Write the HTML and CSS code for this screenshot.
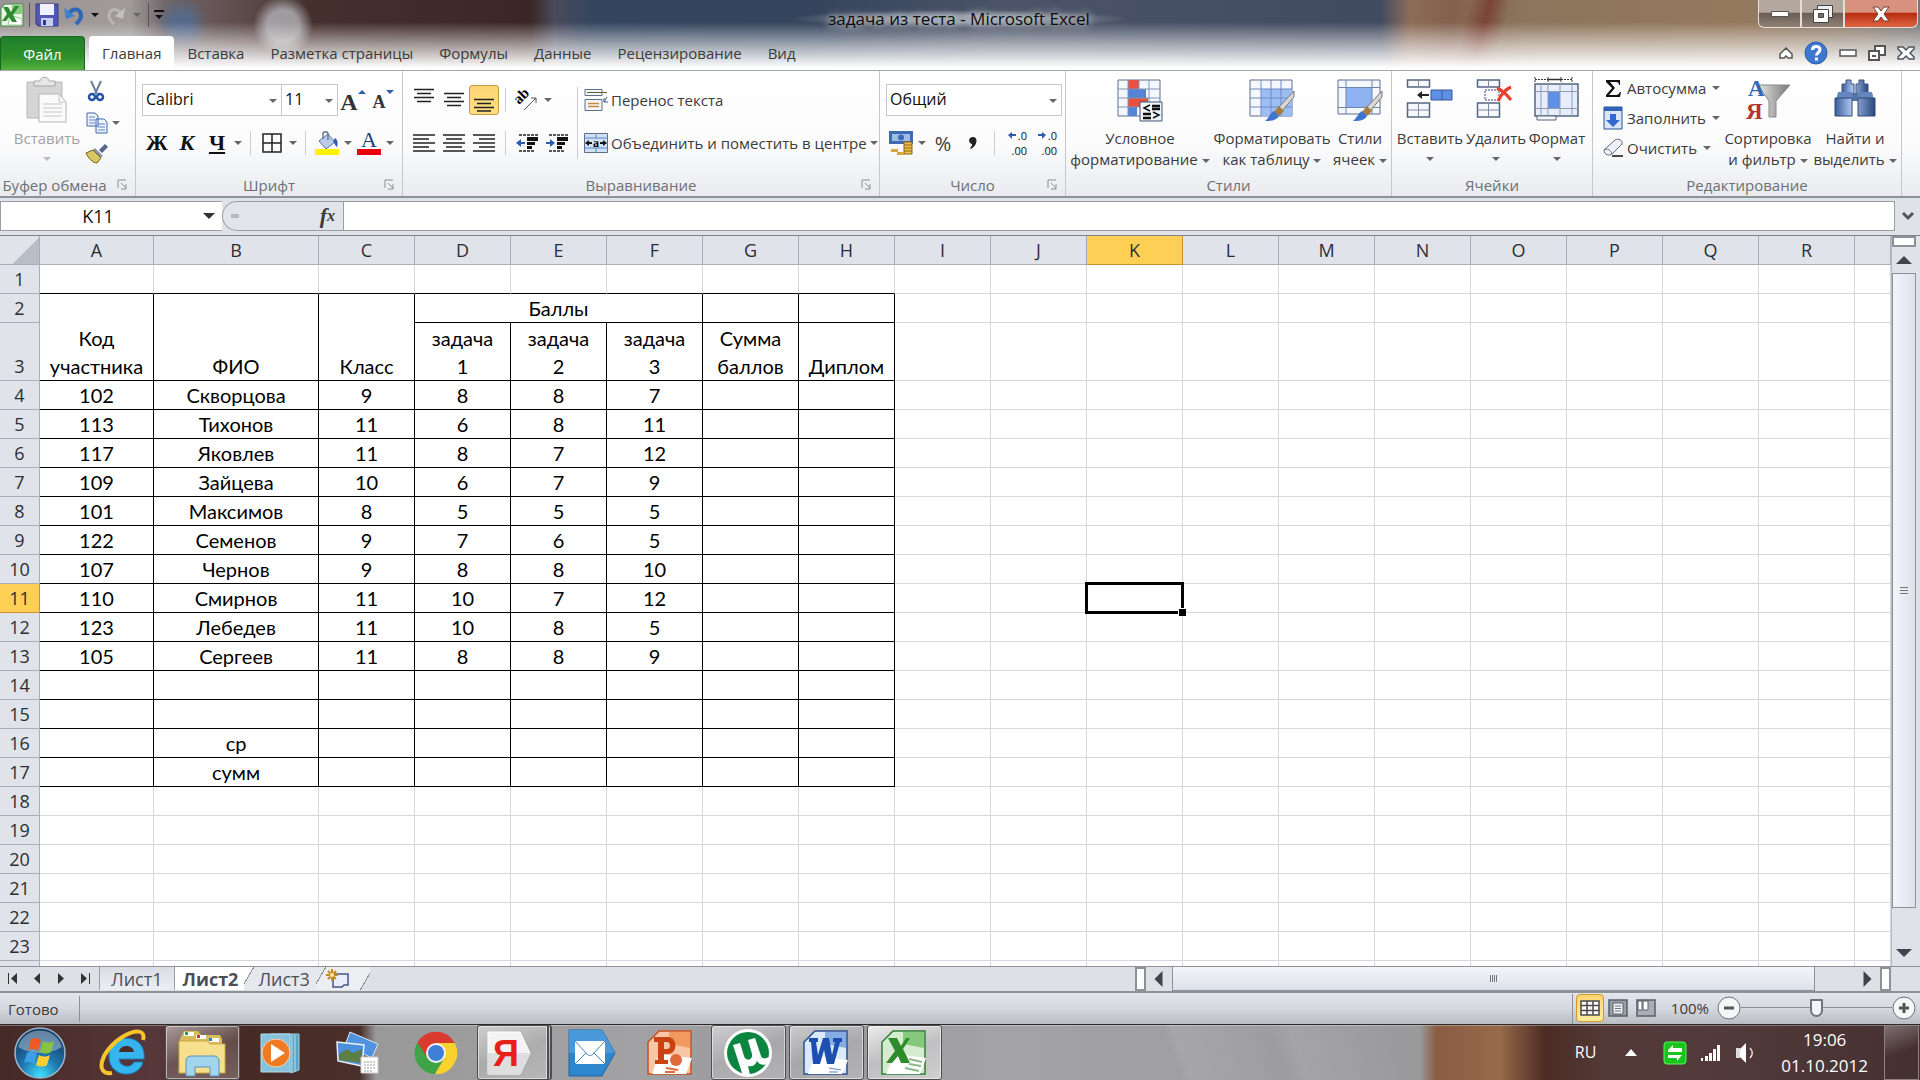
FILE: index.html
```html
<!DOCTYPE html>
<html lang="ru">
<head>
    <meta charset="UTF-8">
    <meta name="viewport" content="width=device-width, initial-scale=1.0">
    <title>задача из теста - Microsoft Excel</title>
    <link rel="stylesheet" href="styles.css">
</head>
<body>

<header class="window-top">
    <div class="titlebar">
        <div class="quick-access">
            <svg width="24" height="24" viewBox="0 0 24 24"><path d="M5 1h18v22H1V5z" fill="#e9f5e6" stroke="#3c8a3c"/><path d="M12 2h10v9H12z" fill="#8cca84"/><path d="M10 12l12 4v6H8z" fill="#fff" stroke="#9ac796"/><path d="M3 4h5l3 5 4-6h4l-6 9 4 7h-5l-3-5-3 4H2l5-7z" fill="#2e8b2e"/></svg>
            <span class="bar-line"></span>
            <button type="button" aria-label="Сохранить"><svg width="24" height="24" viewBox="0 0 24 24"><path d="M1 1h22v22H3l-2-2z" fill="#5157b5" stroke="#34388a"/><path d="M5 1h14v11H5z" fill="#eef0fb"/><path d="M6 15h12v8H6z" fill="#c9cdf0"/><path d="M8 17h3v5H8z" fill="#34388a"/></svg></button>
            <button type="button" aria-label="Отменить"><svg width="20" height="22" viewBox="0 0 20 22"><path d="M5 9c5-6 12-4 12 3 0 4-3 6-5 8" fill="none" stroke="#2f66b5" stroke-width="4"/><path d="M0 4l2 11 9-3z" fill="#3f7fd0"/></svg></button>
            <span class="caret black"></span>
            <button type="button" aria-label="Вернуть"><svg width="20" height="22" viewBox="0 0 20 22"><path d="M15 9C10 3 3 5 3 12c0 4 3 6 5 8" fill="none" stroke="#b9b5b5" stroke-width="3"/><path d="M19 4l-2 11-8-3z" fill="#c5c1c1"/></svg></button>
            <span class="caret"></span>
            <span class="bar-line"></span>
            <button type="button" aria-label="Настройка панели"><svg width="10" height="10" viewBox="0 0 10 10"><path d="M0 0h10v2H0zM1 5h8L5 9z" fill="#111"/></svg></button>
        </div>
        <h1 class="title">задача из теста - Microsoft Excel</h1>
        <div class="window-buttons">
            <button type="button" aria-label="Свернуть"><svg width="18" height="6" viewBox="0 0 18 6"><path d="M.5.5h17v5H.5z" fill="#fff" stroke="#555"/></svg></button>
            <button type="button" aria-label="Восстановить"><svg width="20" height="18" viewBox="0 0 20 18"><path d="M4.500.5h15v12h-15z" fill="#eee" stroke="#444"/><path d="M.5 4.500h15v13H.5z" fill="#fff" stroke="#444"/><path d="M5.500 8.500h5v4h-5z" fill="#776d68" stroke="#444"/></svg></button>
            <button type="button" class="close" aria-label="Закрыть"><svg width="18" height="16" viewBox="0 0 18 16"><path d="M1 1h5l3 4 3-4h5l-5 7 5 7h-5l-3-4-3 4H1l5-7z" fill="#fff" stroke="#6b3a33"/></svg></button>
        </div>
    </div>
    <nav class="tabs">
        <button type="button" class="file-tab">Файл</button>
        <button type="button" class="tab active">Главная</button>
        <button type="button" class="tab">Вставка</button>
        <button type="button" class="tab">Разметка страницы</button>
        <button type="button" class="tab">Формулы</button>
        <button type="button" class="tab">Данные</button>
        <button type="button" class="tab">Рецензирование</button>
        <button type="button" class="tab">Вид</button>
        <div class="book-buttons">
            <button type="button" aria-label="Свернуть ленту"><svg width="14" height="12" viewBox="0 0 14 12"><path d="M7 1l6 6v4H9L7 9l-2 2H1V7z" fill="#fff" stroke="#555" stroke-width="1.500"/></svg></button>
            <button type="button" aria-label="Справка"><svg width="24" height="24" viewBox="0 0 24 24"><circle cx="12" cy="12" r="11" fill="#3f78cf" stroke="#2b5ca8"/><path d="M8.500 9c0-5 7.500-4.500 7.500-.5 0 3-3.500 3-3.500 6M12.500 16.500v3" fill="none" stroke="#fff" stroke-width="3"/></svg></button>
            <button type="button" aria-label="Свернуть книгу"><svg width="18" height="8" viewBox="0 0 18 8"><path d="M1 1h16v6H1z" fill="#fff" stroke="#555" stroke-width="1.500"/></svg></button>
            <button type="button" aria-label="Восстановить книгу"><svg width="18" height="16" viewBox="0 0 18 16"><path d="M7 1h10v9H7z" fill="#fff" stroke="#555" stroke-width="2"/><path d="M1 6h10v9H1z" fill="#fff" stroke="#555" stroke-width="2"/><path d="M4 10h4v2H4z" fill="#555"/></svg></button>
            <button type="button" aria-label="Закрыть книгу"><svg width="18" height="14" viewBox="0 0 18 14"><path d="M1 1h5l3 3 3-3h5v2l-4 4 4 4v2h-5l-3-3-3 3H1v-2l4-4-4-4z" fill="#fff" stroke="#4d5560" stroke-width="1.500"/></svg></button>
        </div>
    </nav>
</header>

<section class="ribbon">
    <div class="group clipboard">
        <div class="group-body">
            <button type="button" class="big disabled">
                <svg width="42" height="46" viewBox="0 0 42 46"><path d="M1 5h35v36H1z" fill="#d5d5d5" stroke="#b9b9b9"/><path d="M8 9V4h6c0-5 9-5 9 0h6v5z" fill="#e6e6e6" stroke="#a8a8a8"/><path d="M13 17h20l7 8v20H13z" fill="#fafafa" stroke="#b5b5b5"/><path d="M33 17v8h7M17 27h19M17 31h19M17 35h19M17 39h19" fill="none" stroke="#c6c6c6"/></svg>
                <span>Вставить</span><span class="caret"></span>
            </button>
            <div class="clip-tools">
                <button type="button" aria-label="Вырезать"><svg width="20" height="22" viewBox="0 0 20 22"><path d="M5 1l6 13M15 1L9 14" stroke="#6a7d9c" stroke-width="2"/><circle cx="6" cy="17" r="3" fill="none" stroke="#2453a8" stroke-width="2.500"/><circle cx="14" cy="17" r="3" fill="none" stroke="#2453a8" stroke-width="2.500"/></svg></button>
                <button type="button" aria-label="Копировать"><svg width="22" height="22" viewBox="0 0 22 22"><path d="M1 1h8l3 3v10H1zM10 7h8l3 3v11H10z" fill="#eef4fd" stroke="#3d67ac"/><path d="M3 5h6M3 8h6M3 11h6M12 12h7M12 15h7M12 18h7" stroke="#5c84c4"/></svg><span class="caret"></span></button>
                <button type="button" aria-label="Формат по образцу"><svg width="22" height="20" viewBox="0 0 22 20"><path d="M13 6l6-6 3 3-6 6z" fill="#56648c"/><path d="M9 4l8 8-3 2-8-7z" fill="#8a93a8"/><path d="M7 6l8 8-4 5C7 19 2 14 0 9z" fill="#d9c662" stroke="#6e601c"/></svg></button>
            </div>
        </div>
        <div class="group-label"><span>Буфер обмена</span><svg class="launcher" viewBox="0 0 10 11"><path d="M1 9V1h8M4 4l5 5M9 5v5H4" fill="none" stroke="#8a8f96"/></svg></div>
    </div>

    <div class="group font">
        <div class="group-body rows">
            <div class="row">
                <span class="combo name"><select aria-label="Шрифт"><option>Calibri</option></select></span>
                <span class="combo size"><select aria-label="Размер шрифта"><option>11</option></select></span>
                <button type="button" class="tool letter grow">A<svg width="8" height="4" viewBox="0 0 8 4"><path d="M0 4l4-4 4 4z" fill="#2d5fa8"/></svg></button>
                <button type="button" class="tool letter shrink">A<svg width="8" height="4" viewBox="0 0 8 4"><path d="M0 0h8L4 4z" fill="#2d5fa8"/></svg></button>
            </div>
            <div class="row">
                <button type="button" class="tool letter">Ж</button>
                <button type="button" class="tool letter italic">К</button>
                <button type="button" class="tool letter underline">Ч</button><span class="caret"></span>
                <span class="sep"></span>
                <button type="button" class="tool" aria-label="Границы"><svg width="20" height="20" viewBox="0 0 20 20"><path d="M1 1h18v18H1zM10 1v18M1 10h18" fill="none" stroke="#222" stroke-width="1.500"/></svg></button><span class="caret"></span>
                <span class="sep"></span>
                <button type="button" class="tool" aria-label="Цвет заливки"><svg width="24" height="24" viewBox="0 0 24 24"><path d="M4 10l9-7 7 8-9 7z" fill="#b9cbe6" stroke="#5b76a6"/><path d="M8 8V3c0-3 5-3 5 0v6" fill="none" stroke="#6b7688" stroke-width="1.500"/><path d="M20 7c3 2 3 6 2 9-2-1-2-4-4-5z" fill="#2c5cb0"/><path d="M0 18h24v6H0z" fill="#fff200"/></svg></button><span class="caret"></span>
                <button type="button" class="tool letter font-color">A</button><span class="caret"></span>
            </div>
        </div>
        <div class="group-label"><span>Шрифт</span><svg class="launcher" viewBox="0 0 10 11"><path d="M1 9V1h8M4 4l5 5M9 5v5H4" fill="none" stroke="#8a8f96"/></svg></div>
    </div>

    <div class="group align">
        <div class="group-body">
            <div class="rows align-left">
                <div class="row">
                    <button type="button" class="tool" aria-label="По верхнему краю"><svg width="22" height="24" viewBox="0 0 22 24"><path d="M1 1.500h20M4 5.500h14M1 9.500h20M4 13.500h14" stroke="#222" stroke-width="1.500"/></svg></button>
                    <button type="button" class="tool" aria-label="По середине"><svg width="22" height="24" viewBox="0 0 22 24"><path d="M1 5.500h20M4 9.500h14M1 13.500h20M4 17.500h14" stroke="#222" stroke-width="1.500"/></svg></button>
                    <button type="button" class="tool pressed" aria-label="По нижнему краю"><svg width="22" height="24" viewBox="0 0 22 24"><path d="M1 11.500h20M4 15.500h14M1 19.500h20M4 23h14" stroke="#222" stroke-width="1.500"/></svg></button>
                    <span class="sep"></span>
                    <button type="button" class="tool" aria-label="Ориентация"><svg width="24" height="24" viewBox="0 0 24 24"><text x="0" y="0" transform="translate(4 17) rotate(-45)" class="svg-ab">ab</text><path d="M9 22L21 10M16 10h5v5" fill="none" stroke="#555"/></svg></button><span class="caret"></span>
                </div>
                <div class="row">
                    <button type="button" class="tool" aria-label="По левому краю"><svg width="22" height="20" viewBox="0 0 22 20"><path d="M0 2h22M0 6h16M0 10h22M0 14h16M0 18h22" stroke="#222" stroke-width="1.500"/></svg></button>
                    <button type="button" class="tool" aria-label="По центру"><svg width="22" height="20" viewBox="0 0 22 20"><path d="M0 2h22M3 6h16M0 10h22M3 14h16M0 18h22" stroke="#222" stroke-width="1.500"/></svg></button>
                    <button type="button" class="tool" aria-label="По правому краю"><svg width="22" height="20" viewBox="0 0 22 20"><path d="M0 2h22M6 6h16M0 10h22M6 14h16M0 18h22" stroke="#222" stroke-width="1.500"/></svg></button>
                    <span class="sep"></span>
                    <button type="button" class="tool" aria-label="Уменьшить отступ"><svg width="22" height="20" viewBox="0 0 22 20"><path d="M3 2h19M3 18h16" stroke="#222" stroke-width="1.500" stroke-dasharray="3 1"/><path d="M11 4h11v4H11zM11 9h8v3h-8zM11 13h5v3h-5z" fill="#111"/><path d="M0 10l5-4v3h4v2H5v3z" fill="#2c5cb0"/></svg></button>
                    <button type="button" class="tool" aria-label="Увеличить отступ"><svg width="22" height="20" viewBox="0 0 22 20"><path d="M3 2h19M3 18h16" stroke="#222" stroke-width="1.500" stroke-dasharray="3 1"/><path d="M11 4h11v4H11zM11 9h8v3h-8zM11 13h5v3h-5z" fill="#111"/><path d="M9 10L4 6v3H0v2h4v3z" fill="#2c5cb0"/></svg></button>
                </div>
            </div>
            <span class="sep tall"></span>
            <div class="rows">
                <div class="row">
                    <button type="button" class="wide"><svg width="24" height="24" viewBox="0 0 24 24"><path d="M1 1.500h17v6H1zM1 11.500h17v11H1z" fill="#f2f5fa" stroke="#5f6f88"/><path d="M3 4.500h20" stroke="#6b5b2a"/><path d="M4 15.500h11M4 18.500h11" stroke="#c98a3a" stroke-width="1.500"/><path d="M23 9l-3 5M20 10v4h4" fill="none" stroke="#3b5a8c"/></svg><span>Перенос текста</span></button>
                </div>
                <div class="row">
                    <button type="button" class="wide"><svg width="24" height="20" viewBox="0 0 24 20"><path d="M.5.5h23v19H.5z" fill="#cfe0f7" stroke="#5f6f88"/><path d="M0 5h24M0 15h24M12 0v5M12 15v5" stroke="#5f86c0"/><path d="M1 10l4-3v2h3v2H5v2zM23 10l-4-3v2h-3v2h3v2z" fill="#111"/><text x="9" y="14" class="svg-a">a</text></svg><span>Объединить и поместить в центре</span><span class="caret"></span></button>
                </div>
            </div>
        </div>
        <div class="group-label"><span>Выравнивание</span><svg class="launcher" viewBox="0 0 10 11"><path d="M1 9V1h8M4 4l5 5M9 5v5H4" fill="none" stroke="#8a8f96"/></svg></div>
    </div>

    <div class="group number">
        <div class="group-body rows">
            <div class="row">
                <span class="combo format"><select aria-label="Числовой формат"><option>Общий</option></select></span>
            </div>
            <div class="row">
                <button type="button" class="tool" aria-label="Финансовый формат"><svg width="24" height="24" viewBox="0 0 24 24"><path d="M0 0h24v13H0z" fill="#3e69b3"/><path d="M3 3h18v7H3z" fill="#9fbce8"/><circle cx="12" cy="6.500" r="3" fill="#3e69b3"/><path d="M15 11h8v12h-8z" fill="#efc04a" stroke="#8f6512"/><path d="M15 14h8M15 17h8M15 20h8" stroke="#8f6512"/><path d="M2 18h7v3H2zM8 21h7v3H8z" fill="#dba73a"/></svg></button><span class="caret"></span>
                <button type="button" class="tool percent">%</button>
                <button type="button" class="tool" aria-label="Формат с разделителями"><svg width="8" height="12" viewBox="0 0 8 12"><path d="M4 0c5 0 5 8-2 12l-1-1c2-2 2-3 2-4-4-1-4-7 1-7z" fill="#222"/></svg></button>
                <span class="sep"></span>
                <button type="button" class="tool decimals"><span><svg width="8" height="7" viewBox="0 0 8 7"><path d="M0 3l4-3v2h4v2H4v3z" fill="#2c5cb0"/></svg>.0</span><span>.00</span></button>
                <button type="button" class="tool decimals"><span><svg width="8" height="7" viewBox="0 0 8 7"><path d="M8 3L4 0v2H0v2h4v3z" fill="#2c5cb0"/></svg>.0</span><span>.00</span></button>
            </div>
        </div>
        <div class="group-label"><span>Число</span><svg class="launcher" viewBox="0 0 10 11"><path d="M1 9V1h8M4 4l5 5M9 5v5H4" fill="none" stroke="#8a8f96"/></svg></div>
    </div>

    <div class="group styles">
        <div class="group-body">
            <button type="button" class="big conditional">
                <svg width="46" height="46" viewBox="0 0 46 46"><path d="M1 3h42v36H1z" fill="#f4f8fe" stroke="#5c6f90"/><path d="M11 3h11v9H11zM11 21h20v9H11z" fill="#e8503f"/><path d="M11 12h18v9H11zM11 30h9v9h-9z" fill="#5583d8"/><path d="M1 12h42M1 21h42M1 30h42M11 3v36M22 3v9M32 3v36" stroke="#8195b8"/><path d="M23 25h22v19H23z" fill="#eef5fd" stroke="#45556f"/><path d="M33 28l-6 3 6 3M36 35l6 3-6 3" fill="none" stroke="#111" stroke-width="1.500"/><path d="M35 29h8M35 32h8M26 37h8M26 41h8" stroke="#111" stroke-width="2.500"/></svg>
                <span>Условное</span><span>форматирование <i class="caret"></i></span>
            </button>
            <button type="button" class="big as-table">
                <svg width="46" height="46" viewBox="0 0 46 46"><path d="M1 3h42v36H1z" fill="#f4f8fe" stroke="#5c6f90"/><path d="M12 12h31v27H12z" fill="#9dbdf5"/><path d="M1 12h42M1 21h42M1 30h42M12 3v36M22 3v36M32 3v36" stroke="#6f8bc0"/><path d="M45 14L30 30l3 4 12-14z" fill="#d6d6d6" stroke="#777"/><path d="M30 29l5 5-5 5-5-4z" fill="#a87b3f"/><path d="M25 34l5 5c-3 5-9 5-14 5 4-3 5-8 9-10z" fill="#3f75cc"/></svg>
                <span>Форматировать</span><span>как таблицу <i class="caret"></i></span>
            </button>
            <button type="button" class="big cell-styles">
                <svg width="46" height="46" viewBox="0 0 46 46"><path d="M1 3h42v34H1z" fill="#f4f8fe" stroke="#5c6f90"/><path d="M9 11h26v19H9z" fill="#8fb2f2"/><path d="M9 3v34M35 3v34M1 10.500h42M1 30.500h42" stroke="#6f86ab"/><path d="M45 14L30 30l3 4 12-14z" fill="#d6d6d6" stroke="#777"/><path d="M30 29l5 5-5 5-5-4z" fill="#a87b3f"/><path d="M25 34l5 5c-3 5-9 5-14 5 4-3 5-8 9-10z" fill="#3f75cc"/></svg>
                <span>Стили</span><span>ячеек <i class="caret"></i></span>
            </button>
        </div>
        <div class="group-label"><span>Стили</span></div>
    </div>

    <div class="group cells">
        <div class="group-body">
            <button type="button" class="big insert">
                <svg width="46" height="46" viewBox="0 0 46 46"><path d="M.5 3h22v7H.5zM.5 26h22v14H.5z" fill="#f6f8fc" stroke="#56657f" stroke-width="1.500"/><path d="M11.500 3v7M11.500 26v14M0 33h23" stroke="#7b8ba6"/><path d="M24 13h21v10H24z" fill="#5f8fe6" stroke="#35579a"/><path d="M35 13v10" stroke="#35579a"/><path d="M10 18l5-4v3h7v2h-7v3z" fill="#222"/></svg>
                <span>Вставить</span><span class="caret"></span>
            </button>
            <button type="button" class="big delete">
                <svg width="46" height="46" viewBox="0 0 46 46"><path d="M4.500 3h22v7h-22zM4.500 26h22v14h-22z" fill="#f6f8fc" stroke="#56657f" stroke-width="1.500"/><path d="M15.500 3v7M15.500 26v14M4 33h23" stroke="#7b8ba6"/><path d="M12 13h14v10H12z" fill="none" stroke="#3d3d96" stroke-dasharray="2 1"/><path d="M24 11c5 2 10 7 14 12M38 10c-5 2-10 8-13 14" stroke="#e8402c" stroke-width="3" fill="none"/></svg>
                <span>Удалить</span><span class="caret"></span>
            </button>
            <button type="button" class="big format-cells">
                <svg width="46" height="46" viewBox="0 0 46 46"><path d="M1 0v5M14 0v5M27 0v5M38 0v5M1 2.500h13M27 2.500h11" stroke="#333" stroke-dasharray="2 1"/><path d="M14 2.500h13" stroke="#333" stroke-width="1.500"/><path d="M1 7h43v32H1z" fill="#e7eefa" stroke="#56657f" stroke-width="1.500"/><path d="M3 39h19v4H3z" fill="#f6f8fc" stroke="#56657f"/><path d="M14 15h12v16H14z" fill="#5f8fe6"/><path d="M7 7v32M14 7v32M26 7v32M38 7v32M1 14.500h43M1 31.500h43" stroke="#8b9bb8"/></svg>
                <span>Формат</span><span class="caret"></span>
            </button>
        </div>
        <div class="group-label"><span>Ячейки</span></div>
    </div>

    <div class="group editing">
        <div class="group-body">
            <div class="edit-list">
                <button type="button"><svg width="20" height="24" viewBox="0 0 20 24"><path d="M3 4h14v5h-1c0-2-1-3-3-3H7l5 6-6 7h7c2 0 3-1 4-3h1l-1 5H3v-2l6-7-6-6z" fill="#111"/></svg><span>Автосумма</span><i class="caret"></i></button>
                <button type="button"><svg width="20" height="24" viewBox="0 0 20 24"><path d="M1 1h18v22H1z" fill="#d9e6f8" stroke="#29508f"/><path d="M1 1h18v4H1z" fill="#2f62b5"/><path d="M7 8h6v6h4l-7 7-7-7h4z" fill="#2f6ad0"/></svg><span>Заполнить</span><i class="caret"></i></button>
                <button type="button"><svg width="20" height="24" viewBox="0 0 20 24"><path d="M1 14L12 4c3-2 8 0 7 4L9 18c-3 2-8 1-8-4z" fill="#eef2f8" stroke="#5d6b82"/><path d="M1 14c3-2 7 0 8 4" fill="none" stroke="#5d6b82"/><path d="M9 20h11" stroke="#111" stroke-width="1.500"/></svg><span>Очистить</span><i class="caret"></i></button>
            </div>
            <button type="button" class="big sort">
                <svg width="46" height="46" viewBox="0 0 46 46"><defs><linearGradient id="funnel"><stop offset="0" stop-color="#e4e4e4"/><stop offset="1" stop-color="#777"/></linearGradient></defs><path d="M13 8h32L31 24v16h-7V24z" fill="url(#funnel)" stroke="#8a8a8a"/><text x="3" y="19" class="svg-sort blue">А</text><text x="1" y="42" class="svg-sort red">Я</text></svg>
                <span>Сортировка</span><span>и фильтр <i class="caret"></i></span>
            </button>
            <button type="button" class="big find">
                <svg width="46" height="46" viewBox="0 0 46 46"><defs><linearGradient id="lens"><stop offset="0" stop-color="#3a5c98"/><stop offset=".4" stop-color="#a9c3ee"/><stop offset="1" stop-color="#2a467c"/></linearGradient></defs><path d="M14 3h5v4h3v11h-12V7h4zM27 3h5v4h4v11H24V7h3z" fill="url(#lens)" stroke="#3a5380"/><path d="M20 16h6v8h-6z" fill="#54719f"/><path d="M6 15h14l1 8H4zM26 15h14l2 8H25z" fill="#6485c0"/><path d="M3 21h17v18H3zM26 21h17v18H26z" fill="url(#lens)" stroke="#2f4878"/></svg>
                <span>Найти и</span><span>выделить <i class="caret"></i></span>
            </button>
        </div>
        <div class="group-label"><span>Редактирование</span></div>
    </div>
</section>

<section class="formula-bar">
    <input type="text" class="name-box" aria-label="Имя ячейки" value="K11">
    <button type="button" class="name-list" aria-label="Список имён"><i class="caret"></i></button>
    <div class="fx"><span class="fx-dot"></span><button type="button">f<sub>x</sub></button></div>
    <input type="text" class="formula" aria-label="Строка формул">
    <button type="button" class="expand" aria-label="Развернуть"><svg width="12" height="10" viewBox="0 0 12 10"><path d="M1 2l5 5 5-5" fill="none" stroke="#555" stroke-width="3"/></svg></button>
</section>

<main class="workspace">
    <div class="sheet">
        <table id="grid">
            <colgroup><col class="col-head"><col class="col-a"><col class="col-b"></colgroup>
            <thead><tr><th class="corner"></th></tr></thead>
            <tbody></tbody>
        </table>
    </div>
    <div class="vscroll">
        <div class="split"></div>
        <svg class="arrow" viewBox="0 0 16 8"><path d="M0 8l8-8 8 8z" fill="#3f444c"/></svg>
        <div class="vthumb"><i></i><i></i><i></i></div>
        <svg class="arrow last" viewBox="0 0 16 8"><path d="M0 0h16L8 8z" fill="#3f444c"/></svg>
    </div>
</main>

<section class="sheet-bar">
    <div class="sheet-nav">
        <button type="button" aria-label="Первый лист"><svg width="10" height="11" viewBox="0 0 10 11"><path d="M0 0h1v11H0zM9 0v11L3 5.500z" fill="#333"/></svg></button>
        <button type="button" aria-label="Предыдущий лист"><svg width="10" height="11" viewBox="0 0 10 11"><path d="M8 0v11L2 5.500z" fill="#333"/></svg></button>
        <button type="button" aria-label="Следующий лист"><svg width="10" height="11" viewBox="0 0 10 11"><path d="M2 0v11l6-5.500z" fill="#333"/></svg></button>
        <button type="button" aria-label="Последний лист"><svg width="10" height="11" viewBox="0 0 10 11"><path d="M1 0v11l6-5.500zM9 0h1v11H9z" fill="#333"/></svg></button>
    </div>
    <button type="button" class="sheet-tab first">Лист1</button>
    <button type="button" class="sheet-tab current">Лист2</button>
    <button type="button" class="sheet-tab slanted">Лист3</button>
    <button type="button" class="sheet-tab slanted new" aria-label="Вставить лист"><svg width="24" height="20" viewBox="0 0 24 20"><path d="M7 5h15v11h-4l-2 2H7z" fill="#e8eefc" stroke="#44558a" stroke-width="1.500"/><path d="M6 0v12M0 6h12M2 2l8 8M10 2l-8 8" stroke="#c98a1c" stroke-width="2"/><circle cx="6" cy="6" r="2" fill="#ffe9a8"/></svg></button>
    <div class="hscroll">
        <div class="hsplit"></div>
        <svg class="harrow" viewBox="0 0 8 16"><path d="M8 0v16L0 8z" fill="#3f444c"/></svg>
        <div class="hthumb"><i></i><i></i><i></i><i></i></div>
        <svg class="harrow right" viewBox="0 0 8 16"><path d="M0 0v16l8-8z" fill="#3f444c"/></svg>
        <div class="hsplit"></div>
    </div>
</section>

<footer class="status">
    <span class="ready">Готово</span>
    <div class="status-right">
        <button type="button" class="view on" aria-label="Обычный"><svg width="20" height="16" viewBox="0 0 20 16"><path d="M1 1h18v14H1zM7 1v14M13 1v14M1 5.500h18M1 10.500h18" fill="#fff" stroke="#4a4a4a" stroke-width="1.500"/></svg></button>
        <button type="button" class="view" aria-label="Разметка страницы"><svg width="20" height="18" viewBox="0 0 20 18"><path d="M1 1h18v16H1z" fill="#9ba0a8" stroke="#5a5f68" stroke-width="1.500"/><path d="M5 4h10v11H5z" fill="#eef0f3" stroke="#5a5f68"/><path d="M7 7h6M7 9.500h6M7 12h6" stroke="#70757e"/></svg></button>
        <button type="button" class="view" aria-label="Страничный режим"><svg width="20" height="18" viewBox="0 0 20 18"><path d="M1 1h18v16H1z" fill="#a9aeb6" stroke="#5a5f68" stroke-width="1.500"/><path d="M2 2h4v9H2zM7 2h5v9H7z" fill="#fff" stroke="#5a5f68"/></svg></button>
        <span class="percent-value">100%</span>
        <button type="button" class="round" aria-label="Уменьшить"><svg width="24" height="24" viewBox="0 0 24 24"><circle cx="12" cy="12" r="11" fill="#f5f6f8" stroke="#6d727a"/><path d="M7 12h10" stroke="#555" stroke-width="3"/></svg></button>
        <input type="range" class="zoom" aria-label="Масштаб" min="0" max="100" value="50">
        <button type="button" class="round" aria-label="Увеличить"><svg width="24" height="24" viewBox="0 0 24 24"><circle cx="12" cy="12" r="11" fill="#f5f6f8" stroke="#6d727a"/><path d="M7 12h10M12 7v10" stroke="#555" stroke-width="3"/></svg></button>
    </div>
</footer>

<nav class="taskbar">
    <button type="button" class="start" aria-label="Пуск">
        <svg width="52" height="52" viewBox="0 0 52 52"><defs><radialGradient id="orb" cx=".5" cy=".95" r=".9"><stop offset="0" stop-color="#3fe0ff"/><stop offset=".45" stop-color="#1f74ac"/><stop offset="1" stop-color="#12385f"/></radialGradient></defs><circle cx="26" cy="26" r="25" fill="url(#orb)" stroke="#9bb6cc" stroke-width="1.500"/><path d="M4 20C10-2 42-2 48 20c-14 8-30 8-44 0z" fill="#c9dcec" opacity=".45"/><path d="M17 12c4-2 7-1 10 1l-3 11c-3-2-6-3-10-1z" fill="#ee5a24"/><path d="M29 14c4 2 7 2 11 0l-3 11c-4 2-7 2-11 0z" fill="#86c440"/><path d="M13 26c4-2 7-1 10 1l-3 10c-3-2-6-3-10-1z" fill="#3d9fe8"/><path d="M25 28c4 2 7 2 11 0l-3 10c-4 2-7 2-11 0z" fill="#ffce2e"/></svg>
    </button>
    <button type="button" class="app" aria-label="Internet Explorer">
        <svg width="48" height="46" viewBox="0 0 48 46"><path d="M44 29H19c1 9 13 9 15 3h9c-4 17-34 17-34-6 0-24 38-24 35 3z" fill="#35b5ee" stroke="#1b7fc0"/><path d="M19 22h15c-1-8-14-8-15 0z" fill="#4b2d2a"/><path d="M12 43C-6 46 0 20 24 6c12-7 22-6 19 4" fill="none" stroke="#f6c42c" stroke-width="4"/></svg>
    </button>
    <button type="button" class="app open" aria-label="Проводник">
        <svg width="48" height="48" viewBox="0 0 48 48"><path d="M4 6l2-4h14l3 4h19l2 4v33H2V10z" fill="#d9bc5a"/><path d="M6 3h10v4H6zM18 6h10v4H18zM31 9h10v4H31z" fill="#fff"/><path d="M7 3h3v3H7z" fill="#3b9a3b"/><path d="M19 6h3v3h-3z" fill="#c93a2a"/><path d="M31 9h3v3h-3z" fill="#2c7dc9"/><path d="M1 12h28l3 3h15v29H1z" fill="#f6e08d" stroke="#c9a945"/><path d="M8 47V32c0-3 2-5 5-5h23c3 0 5 2 5 5v15h-9V38H17v9z" fill="#a3d4ee" stroke="#5795bf"/></svg>
    </button>
    <button type="button" class="app" aria-label="Проигрыватель">
        <svg width="42" height="42" viewBox="0 0 42 42"><path d="M12 2h28v36l-8 3z" fill="#5ba5c4" stroke="#a5d2e4"/><path d="M36 3v36M33 3v37" stroke="#bfe3f0"/><path d="M2 2h29v38H2z" fill="#86c2dc" stroke="#b5dcea"/><circle cx="17" cy="21" r="14" fill="#f07a23" stroke="#fbd3ad"/><path d="M12 12l14 9-14 9z" fill="#fff"/></svg>
    </button>
    <button type="button" class="app" aria-label="Фотографии">
        <svg width="44" height="44" viewBox="0 0 44 44"><path d="M14 1l28 12-6 14L9 14z" fill="#4f93e0" stroke="#dfe8f2"/><path d="M1 11l27 3-2 21L2 30z" fill="#4a90e0" stroke="#eee" stroke-width="1.500"/><path d="M3 23l8-5 6 4 9-4v14L3 29z" fill="#5c7f45"/><path d="M25 26h17v16H25z" fill="#fff" stroke="#ccc"/><path d="M28 31h12M28 34h12M28 37h12M28 40h9" stroke="#999" stroke-dasharray="2 1"/></svg>
    </button>
    <button type="button" class="app" aria-label="Chrome">
        <svg width="44" height="44" viewBox="0 0 44 44"><path d="M22 22L3.800 11.500A21 21 0 0 1 40.200 11.500z" fill="#da3b2e"/><path d="M22 22L3.800 11.500A21 21 0 0 0 22 43z" fill="#3fa447"/><path d="M22 22l18.200-10.500A21 21 0 0 1 22 43z" fill="#f9d22e"/><path d="M22 12h18.500a21 21 0 0 0-37-.5L13 27z" fill="#da3b2e"/><path d="M13 27L3.500 11.500A21 21 0 0 0 21 43l9.500-16z" fill="#3fa447"/><path d="M31 27l-10 16a21 21 0 0 0 19.500-31H22z" fill="#f9d22e"/><circle cx="22" cy="22" r="10" fill="#f4f4f4"/><circle cx="22" cy="22" r="8" fill="#3f7fd6"/></svg>
    </button>
    <button type="button" class="app open stacked" aria-label="Яндекс">
        <svg width="44" height="44" viewBox="0 0 44 44"><path d="M1 1h32l10 21-10 21H1z" fill="#f3f3f3" stroke="#fff"/><path d="M1 22h42L33 43H1z" fill="#dedede"/><text x="6" y="35" class="svg-ya">Я</text></svg>
    </button>
    <button type="button" class="app" aria-label="Почта">
        <svg width="48" height="48" viewBox="0 0 48 48"><path d="M1 1h33l13 23-13 23H1z" fill="#2e86cc" stroke="#1d66a5"/><path d="M1 1h33l13 23H1z" fill="#4799da"/><path d="M7 12h30v23H7z" fill="#fff"/><path d="M7 12l12 13c2 2 4 2 6 0l12-13M7 35l11-11M37 35L26 24" fill="none" stroke="#3f87c0"/></svg>
    </button>
    <button type="button" class="app" aria-label="PowerPoint">
        <svg width="46" height="46" viewBox="0 0 46 46"><path d="M12 1h32v43H1V12z" fill="#f7c6a4" stroke="#c8501e" stroke-width="1.500"/><path d="M22 2h21v16l-21-4z" fill="#f09a62"/><path d="M12 24l33 4-6 16H5z" fill="#fff"/><circle cx="29" cy="30" r="6" fill="#e06a3a"/><path d="M19 38l12 2M18 42h10" stroke="#e06a3a" stroke-width="2"/><path d="M7 7h14c10 0 10 17 0 17h-4v6h4v4H8v-4h3V12H7zm10 5v7h3c4 0 4-7 0-7z" fill="#c8430f"/></svg>
    </button>
    <button type="button" class="app open" aria-label="uTorrent">
        <svg width="50" height="50" viewBox="0 0 50 50"><circle cx="25" cy="25" r="24" fill="#fff"/><circle cx="25" cy="25" r="21" fill="#0c8540"/><path d="M10 17l7-2 4 13c2 6 9 4 8-2l-4-14 7-2 6 18c1 3 4 3 8 1v6c-5 3-10 2-12-2-2 5-6 6-9 5l2 9-7 1z" fill="#fff"/></svg>
    </button>
    <button type="button" class="app open" aria-label="Word">
        <svg width="46" height="46" viewBox="0 0 46 46"><path d="M12 1h32v43H1V12z" fill="#dce9fa" stroke="#2c4f8f" stroke-width="1.500"/><path d="M22 2h21v16l-21-4z" fill="#86ace4"/><path d="M12 26l33 4-6 14H5z" fill="#fff"/><path d="M26 38l12 2M26 42h9" stroke="#5c86c9"/><path d="M6 8h9v4h-2l2 13 5-17h6l3 17 3-13h-2V8h9v4h-2l-6 22h-7l-3-14-4 14h-7L8 12H6z" fill="#1d50ae"/></svg>
    </button>
    <button type="button" class="app open front" aria-label="Excel">
        <svg width="46" height="46" viewBox="0 0 46 46"><path d="M12 1h32v43H1V12z" fill="#d5ecd0" stroke="#2f7f35" stroke-width="1.500"/><path d="M22 2h21v16l-21-4z" fill="#86c97c"/><path d="M14 24l31 4-6 16H5z" fill="#fff"/><path d="M28 29l13 3M28 34l12 2M24 38l14 3" stroke="#8ab98a" stroke-width="2"/><path d="M7 8h9l4 8 5-8h4L22 19l7 14h-9l-3-7-6 7H5l9-12z" fill="#2f8c2c"/></svg>
    </button>
    <div class="tray">
        <span class="lang">RU</span>
        <svg width="12" height="7" viewBox="0 0 12 7"><path d="M0 7l6-7 6 7z" fill="#fff"/></svg>
        <svg width="24" height="24" viewBox="0 0 24 24"><rect x="1" y="1" width="22" height="22" rx="3" fill="#19c51d" stroke="#5df25f"/><path d="M5 9l5-5v3h9v4H5zM19 14l-5 6v-3H5v-3z" fill="#fff"/></svg>
        <svg width="20" height="17" viewBox="0 0 20 17"><path d="M0 14h2v3H0zM4 12h3v5H4zM8 9h3v8H8zM12 5h3v12h-3zM16 1h3v16h-3z" fill="#fff"/></svg>
        <svg width="20" height="22" viewBox="0 0 20 22"><path d="M1 6h4v10H1z" fill="#ddd"/><path d="M5 7l6-6v20l-6-6z" fill="#fff"/><path d="M15 6c3 3 3 7 0 10" fill="none" stroke="#e6e0e0" stroke-width="1.500"/></svg>
        <div class="clock"><time>19:06</time><time>01.10.2012</time></div>
        <button type="button" class="show-desktop" aria-label="Свернуть все окна"></button>
    </div>
</nav>

<script src="script.js"></script>
</body>
</html>
```
FILE: styles.css
```css
* {
    box-sizing: border-box;
}
body {
    margin: 0;
    height: 100vh;
    display: flex;
    flex-direction: column;
    overflow: hidden;
    font-family: "Open Sans", "Noto Sans", sans-serif;
    font-size: 15px;
    color: #3b3b3b;
}
button {
    display: flex;
    align-items: center;
    justify-content: center;
    flex: none;
    padding: 0;
    border: 0;
    background: none;
    color: inherit;
    font: inherit;
    white-space: nowrap;
}
svg {
    display: block;
    flex: none;
    overflow: visible;
}
input,
select {
    font: inherit;
    color: #111;
    border-radius: 0;
}

/* small drop-down arrow */
.caret {
    display: inline-block;
    flex: none;
    width: 0;
    height: 0;
    border: 4px solid transparent;
    border-top-color: #666;
    border-bottom-width: 0;
    margin: 0 2px;
    vertical-align: middle;
}
.caret.black {
    border-top-color: #111;
}

/* title and tabs */
.window-top {
    flex: none;
    background:
        linear-gradient(rgba(255, 255, 255, 0) 22px, rgba(255, 255, 255, .5) 44px, #fff 68px),
        radial-gradient(circle at 283px 26px, rgba(215, 220, 226, .6) 16px, transparent 30px),
        radial-gradient(circle at 182px 24px, rgba(75, 110, 155, .7) 8px, transparent 26px),
        radial-gradient(ellipse at 960px 19px, rgba(185, 190, 200, .7) 60px, transparent 170px),
        linear-gradient(105deg, transparent 1420px, rgba(110, 30, 20, .5) 1440px, transparent 1460px),
        linear-gradient(90deg, #9a9494 0, #a09a9a 130px, #70676a 165px, #5f4c4c 240px, #45302e 310px, #3a2725 530px, #4a4a5c 555px, #34465f 590px, #35445c 820px, #4b5468 1000px, #414b60 1380px, #8c6c58 1410px, #84604e 1450px, #8b745b 1520px, #94795d 1740px, #8b7a6c 1860px, #777 1920px);
    border-bottom: 1px solid #a5a9af;
}
.titlebar {
    height: 36px;
    display: flex;
    justify-content: space-between;
    align-items: flex-start;
}
.quick-access {
    flex: 1;
    display: flex;
    align-items: center;
    gap: 5px;
    height: 30px;
}
.bar-line {
    width: 1px;
    height: 24px;
    background: #555;
}
.title {
    margin: 0;
    padding: 0 14px;
    font-size: 17px;
    line-height: 38px;
    font-weight: normal;
    color: #0c0c0c;
    text-shadow: 0 0 8px #c5c8cc, 0 0 8px #c5c8cc;
}
.window-buttons {
    flex: 1;
    display: flex;
    justify-content: flex-end;
    padding-right: 2px;
}
.window-buttons button {
    width: 43px;
    height: 28px;
    border: 1px solid #e5ddd5;
    border-top: 0;
    background: linear-gradient(#b3a79e 45%, #6c5e54 50%, #8f8175);
}
.window-buttons button:first-child {
    border-radius: 0 0 0 6px;
}
.window-buttons .close {
    width: 74px;
    border-radius: 0 0 6px 0;
    background: linear-gradient(#d8907f 45%, #b92c12 50%, #dd6744);
}
.tabs {
    height: 34px;
    display: flex;
    align-items: stretch;
}
.file-tab {
    width: 85px;
    margin-right: 4px;
    color: #fff;
    background: linear-gradient(#1f7f2a, #2e8f2c 60%, #54b13c);
    border: 1px solid #18661f;
    border-bottom: 0;
    border-radius: 4px 4px 0 0;
}
.tab {
    padding: 0 13px;
}
.tab.active {
    background: #fff;
    border-radius: 4px 4px 0 0;
}
.book-buttons {
    margin-left: auto;
    display: flex;
    align-items: center;
    gap: 11px;
    padding-right: 5px;
}

/* ribbon */
.ribbon {
    flex: none;
    display: flex;
    height: 127px;
    background: linear-gradient(#fff, #fbfbfc 60%, #e9ebee);
    border-bottom: 2px solid #8d9299;
}
.group {
    flex: none;
    display: flex;
    flex-direction: column;
    border-right: 1px solid #c5c9cf;
}
.group-body {
    flex: 1;
    display: flex;
}
.group-label {
    position: relative;
    height: 22px;
    line-height: 22px;
    text-align: center;
    color: #6c7076;
}
.launcher {
    position: absolute;
    right: 8px;
    top: 5px;
    width: 10px;
    height: 11px;
}
.clipboard { width: 136px; }
.font { width: 267px; }
.align { width: 477px; }
.number { width: 186px; }
.styles { width: 326px; }
.cells { width: 201px; }
.editing { width: 309px; }
.clipboard .group-label {
    padding-right: 26px;
}
.rows {
    display: flex;
    flex-direction: column;
    gap: 11px;
    padding: 13px 0 0;
}
.font .rows,
.number .rows {
    padding-left: 6px;
}
.align-left {
    width: 174px;
    padding-left: 6px;
}
.row {
    display: flex;
    align-items: center;
    height: 32px;
}
.tool {
    width: 30px;
    height: 30px;
}
.pressed {
    background: linear-gradient(#fbd571, #ffdf82);
    border: 1px solid #c29b3f;
    border-radius: 3px;
}
.sep {
    width: 1px;
    height: 24px;
    margin: 0 6px;
    background: #c9ccd1;
}
.sep.tall {
    height: 72px;
    margin: 16px 6px 0 0;
}
.letter {
    font-family: "Liberation Serif", serif;
    font-size: 22px;
    font-weight: bold;
    color: #111;
}
.grow,
.shrink {
    align-items: flex-end;
    line-height: 26px;
    color: #333;
}
.grow {
    font-size: 24px;
}
.grow svg,
.shrink svg {
    align-self: flex-start;
    margin-top: 5px;
}
.shrink {
    font-size: 18px;
}
.italic {
    font-style: italic;
}
.underline {
    text-decoration: underline;
}
.font-color {
    width: 24px;
    height: 24px;
    margin: 0 3px;
    font-weight: normal;
    line-height: 18px;
    color: #1d3f7c;
    border-bottom: 6px solid #e8000c;
}
.combo {
    position: relative;
    display: flex;
    height: 32px;
}
.combo select {
    width: 100%;
    padding: 0 0 3px 3px;
    font-size: 16px;
    border: 1px solid #c5c9cf;
    background: #fff;
    appearance: none;
}
.combo::after {
    content: "";
    position: absolute;
    right: 5px;
    top: 15px;
    border: 4px solid transparent;
    border-top-color: #666;
    border-bottom: 0;
}
.combo.name {
    width: 140px;
}
.combo.size {
    width: 57px;
    margin-left: -1px;
}
.combo.format {
    width: 176px;
}
.wide {
    gap: 3px;
}
.wide .caret {
    margin: 0;
}
.percent {
    font-size: 20px;
}
.decimals {
    flex-direction: column;
    align-items: flex-end;
    padding-right: 4px;
    font-size: 11px;
    line-height: 15px;
    color: #111;
}
.decimals span {
    display: flex;
    align-items: center;
    gap: 2px;
}
.svg-ab {
    font: bold 15px "Liberation Serif", serif;
}
.svg-a {
    font: bold 12px "Liberation Serif", serif;
}
.svg-sort {
    font: bold 23px "Liberation Serif", serif;
}
.blue {
    fill: #3465b8;
}
.red {
    fill: #b33431;
}
.svg-ya {
    font: bold 36px "Liberation Sans", sans-serif;
    fill: #e8201a;
}
.big {
    flex-direction: column;
    justify-content: flex-start;
    padding-top: 6px;
    line-height: 21px;
}
.big svg {
    margin-bottom: 5px;
}
.big .caret {
    margin: 0;
}
.big > .caret {
    margin-top: 8px;
}
.disabled {
    width: 76px;
    margin-left: 9px;
    color: #a2a2a2;
}
.disabled .caret {
    border-top-color: #bbb;
}
.clip-tools {
    display: flex;
    flex-direction: column;
    align-items: flex-start;
    gap: 10px;
    padding: 9px 0 0 1px;
}
.clip-tools button {
    gap: 2px;
}
.conditional { width: 148px; }
.as-table { width: 116px; }
.cell-styles { width: 60px; }
.insert { width: 76px; }
.delete { width: 56px; }
.format-cells { width: 66px; }
.edit-list {
    display: flex;
    flex-direction: column;
    align-items: flex-start;
    gap: 6px;
    padding: 5px 0 0 10px;
    width: 128px;
}
.edit-list button {
    gap: 4px;
    height: 24px;
}
.sort { width: 94px; }
.find { width: 80px; }

/* formula bar */
.formula-bar {
    flex: none;
    display: flex;
    height: 38px;
    padding: 3px 0 4px;
    background: #dfe3e8;
    border-bottom: 1px solid #7f848b;
}
.formula-bar input {
    border: 1px solid #9a9fa6;
    background: #fff;
    font-size: 18px;
    outline: 0;
}
.formula-bar .name-box {
    width: 195px;
    border-right: 0;
    text-align: center;
}
.name-list {
    width: 27px;
    background: #fff;
    border: 1px solid #9a9fa6;
    border-width: 1px 0;
}
.name-list .caret {
    border-width: 6px 6px 0;
    border-top-color: #333;
}
.fx {
    width: 121px;
    display: flex;
    align-items: center;
    justify-content: space-between;
    padding: 0 8px;
    background: #e1e4e9;
    border: 1px solid #9a9fa6;
    border-right: 0;
    border-radius: 16px 0 0 16px;
}
.fx-dot {
    width: 8px;
    height: 4px;
    background: #b5b8bd;
}
.fx button {
    font: italic bold 22px "Liberation Serif", serif;
    line-height: 24px;
}
.fx sub {
    font-size: 16px;
}
.formula {
    flex: 1;
}
.expand {
    width: 25px;
    background: #dfe3e8;
}

/* grid */
.workspace {
    flex: 1;
    min-height: 0;
    display: flex;
}
.sheet {
    flex: 1;
    overflow: hidden;
}
table {
    width: 100%;
    table-layout: fixed;
    border-collapse: separate;
    border-spacing: 0;
    font-size: 18px;
    line-height: 28px;
    color: #000;
}
.col-head { width: 40px; }
.col-a { width: 114px; }
.col-b { width: 165px; }
.col { width: 96px; }
th,
td {
    height: 29px;
    padding: 0;
    border-right: 1px solid #d5d7da;
    border-bottom: 1px solid #d5d7da;
    text-align: center;
    vertical-align: bottom;
}
td {
    font-family: Lato, "Open Sans", sans-serif;
    font-size: 20px;
}
th {
    font-weight: normal;
    color: #2b2f35;
    background: #e0e3e9;
    border-color: #a9adb5;
}
.corner {
    background: linear-gradient(135deg, #e0e3e9 60%, #b9bec6 60%);
}
.tall-row > * {
    height: 58px;
}
th.selected {
    background: #fdcf55;
    border-color: #c9922e;
}
td.bordered {
    border-color: #000;
}
td.line-below {
    border-bottom-color: #000;
}
td.selected {
    position: relative;
}
td.selected::before {
    content: "";
    position: absolute;
    inset: -2px;
    border: 3px solid #000;
}
td.selected::after {
    content: "";
    position: absolute;
    right: -4px;
    bottom: -4px;
    width: 7px;
    height: 7px;
    background: #000;
    border: 1px solid #fff;
    border-width: 1px 0 0 1px;
}

/* scroll bars */
.vscroll {
    flex: none;
    width: 29px;
    display: flex;
    flex-direction: column;
    align-items: flex-start;
    padding-right: 3px;
    background: #dfe3e8;
    border-left: 1px solid #b5b9c0;
}
.split {
    width: 24px;
    height: 11px;
    background: #fff;
    border: 2px solid #8d9299;
}
.arrow {
    width: 16px;
    height: 8px;
    margin: 9px 4px;
}
.arrow.last {
    margin: auto 4px 9px;
}
.vthumb {
    width: 24px;
    flex: 0 0 87%;
    display: flex;
    flex-direction: column;
    align-items: center;
    justify-content: center;
    gap: 2px;
    background: linear-gradient(90deg, #f3f5f9, #dde1ea);
    border: 1px solid #8d9299;
}
.vthumb i {
    width: 8px;
    height: 1px;
    background: #777;
}
.sheet-bar {
    flex: none;
    display: flex;
    height: 27px;
    padding-bottom: 1px;
    background: #dde1e6;
    border-top: 1px solid #8d9299;
    border-bottom: 2px solid #8d9299;
}
.sheet-nav {
    display: flex;
    gap: 14px;
    padding: 0 9px 0 8px;
}
.sheet-tab {
    padding: 0 11px;
    font-size: 18px;
    color: #4b4f57;
    border-left: 1px solid #9a9fa6;
    background: linear-gradient(#d9dde4, #eceef2);
}
.sheet-tab.current {
    padding: 0 6px 0 8px;
    font-weight: bold;
    background: #fff;
}
.sheet-tab.slanted {
    padding: 0 6px 0 14px;
    border-left: 0;
    background: linear-gradient(120deg, #fff 8px, #8d9299 8px, #8d9299 9px, #e5e8ed 9px);
}
.sheet-tab.new {
    padding: 0 20px 0 10px;
    background: linear-gradient(120deg, #e5e8ed 8px, #8d9299 8px, #8d9299 9px, #eceef2 9px, #eceef2 calc(100% - 9px), #8d9299 calc(100% - 9px), #8d9299 calc(100% - 8px), #dde1e6 calc(100% - 8px));
}
.hscroll {
    margin-left: auto;
    width: 41%;
    max-width: 785px;
    display: flex;
    align-items: center;
    padding-right: 29px;
}
.hsplit {
    width: 11px;
    height: 24px;
    background: #fff;
    border: 2px solid #8d9299;
}
.harrow {
    width: 9px;
    height: 16px;
    margin: 0 9px 0 8px;
}
.harrow.right {
    margin: 0 8px 0 auto;
}
.hthumb {
    flex: 0 0 85%;
    height: 24px;
    display: flex;
    align-items: center;
    justify-content: center;
    gap: 1px;
    background: linear-gradient(#f3f5f9, #dde1ea);
    border: 1px solid #8d9299;
    border-top: 0;
}
.hthumb i {
    width: 1px;
    height: 7px;
    background: #777;
}

/* status bar */
.status {
    flex: none;
    height: 31px;
    display: flex;
    align-items: center;
    justify-content: space-between;
    background: linear-gradient(#e2e5ec, #d5d8de 50%, #b9bcc1);
}
.ready {
    width: 80px;
    padding-left: 8px;
    line-height: 26px;
    border-right: 1px solid #8d9299;
}
.status-right {
    display: flex;
    align-items: center;
    padding: 0 4px 2px 3px;
    border-left: 1px solid #8d9299;
}
.view {
    width: 28px;
    height: 28px;
}
.view.on {
    background: linear-gradient(#fbd571, #ffeb9e);
    border: 1px solid #d19a28;
    border-radius: 4px;
}
.percent-value {
    padding: 0 8px 0 11px;
}
.zoom {
    width: 151px;
    height: 24px;
    margin: 0;
    appearance: none;
    background: linear-gradient(#8b9097, #8b9097) center / 100% 1px no-repeat;
}
.zoom::-webkit-slider-thumb {
    appearance: none;
    width: 13px;
    height: 18px;
    background: #f3f4f6;
    border: 2px solid #70757d;
    border-radius: 1px 1px 7px 7px;
}

/* taskbar */
.taskbar {
    flex: none;
    height: 56px;
    display: flex;
    gap: 3px;
    border-top: 1px solid #2e2a2c;
    background:
        linear-gradient(rgba(255, 255, 255, .3) 1px, transparent 1px),
        linear-gradient(70deg, transparent 1110px, rgba(255, 255, 255, .08) 1120px, transparent 1210px, rgba(255, 255, 255, .08) 1230px, transparent 1320px),
        linear-gradient(90deg, #452926 0, #57383a 150px, #462a25 250px, #4a302b 360px, #999 376px, #a2a2a4 640px, #97979a 800px, #a3a3a5 1000px, #9a9a9c 1420px, #8a5d44 1436px, #966a4a 1500px, #4d2c24 1545px, #523836 1600px, #533b3b 1700px, #453031 1920px);
}
.start {
    width: 84px;
    padding-right: 4px;
}
.app {
    width: 75px;
    padding-right: 2px;
}
.open {
    border: 1px solid #4d4d50;
    border-radius: 3px;
    background: linear-gradient(160deg, rgba(255, 255, 255, .5), rgba(255, 255, 255, .15) 50%, rgba(255, 255, 255, .25));
    box-shadow: inset 0 0 0 1px rgba(255, 255, 255, .5);
}
.stacked {
    padding-right: 8px;
    border-right-width: 5px;
    border-right-style: double;
}
.front {
    background: linear-gradient(160deg, rgba(255, 255, 255, .8), rgba(255, 255, 255, .35) 50%, rgba(255, 255, 255, .5));
}
.tray {
    margin-left: auto;
    display: flex;
    align-items: center;
    padding-right: 1px;
    color: #fff;
}
.lang {
    margin: 0 29px 2px 0;
    font-size: 16px;
}
.tray svg {
    margin-right: 14px;
}
.tray svg:nth-of-type(1) {
    margin-right: 26px;
}
.tray svg:nth-of-type(4) {
    margin-right: 26px;
}
.clock {
    display: flex;
    flex-direction: column;
    align-items: center;
    font-size: 17px;
    line-height: 26px;
}
.show-desktop {
    align-self: stretch;
    width: 35px;
    margin-left: 16px;
    border: 1px solid #8d8080;
    background: linear-gradient(160deg, rgba(255, 255, 255, .3), transparent 50%);
}
```
FILE: script.js
```js
const letters = 'ABCDEFGHIJKLMNOPQR'.split('');
const rowCount = 24;
const selected = { col: 'K', row: 11 };

const students = [
    [102, 'Скворцова', 9, 8, 8, 7],
    [113, 'Тихонов', 11, 6, 8, 11],
    [117, 'Яковлев', 11, 8, 7, 12],
    [109, 'Зайцева', 10, 6, 7, 9],
    [101, 'Максимов', 8, 5, 5, 5],
    [122, 'Семенов', 9, 7, 6, 5],
    [107, 'Чернов', 9, 8, 8, 10],
    [110, 'Смирнов', 11, 10, 7, 12],
    [123, 'Лебедев', 11, 10, 8, 5],
    [105, 'Сергеев', 11, 8, 8, 9]
];

const values = {
    A2: 'Код<br>участника', B2: 'ФИО', C2: 'Класс', D2: 'Баллы',
    D3: 'задача<br>1', E3: 'задача<br>2', F3: 'задача<br>3',
    G3: 'Сумма<br>баллов', H3: 'Диплом',
    B16: 'ср', B17: 'сумм'
};
students.forEach((student, i) => {
    student.forEach((value, j) => {
        values[letters[j] + (i + 4)] = value;
    });
});

// merged cells: A2:A3, B2:B3, C2:C3 and D2:F2
const merged = { A2: 'rowSpan', B2: 'rowSpan', C2: 'rowSpan', D2: 'colSpan' };
const covered = ['A3', 'B3', 'C3', 'E2', 'F2'];

const table = document.getElementById('grid');
const colgroup = table.querySelector('colgroup');
const head = table.tHead.rows[0];

letters.concat('').forEach((letter, i) => {
    if (i > 1) {
        const col = document.createElement('col');
        if (letter) col.className = 'col';
        colgroup.appendChild(col);
    }
    const th = document.createElement('th');
    th.textContent = letter;
    if (letter === selected.col) th.className = 'selected';
    head.appendChild(th);
});

for (let r = 1; r <= rowCount; r++) {
    const tr = table.tBodies[0].insertRow();
    if (r === 3) tr.className = 'tall-row';

    const th = document.createElement('th');
    th.textContent = r;
    if (r === selected.row) th.className = 'selected';
    tr.appendChild(th);

    letters.concat('').forEach((letter, i) => {
        const key = letter + r;
        if (covered.includes(key)) return;
        const td = tr.insertCell();
        td.innerHTML = values[key] ?? '';
        if (merged[key] === 'rowSpan') td.rowSpan = 2;
        if (merged[key] === 'colSpan') td.colSpan = 3;
        if (i < 8 && r === 1) td.classList.add('line-below');
        if (i < 8 && r > 1 && r < 18) td.classList.add('bordered');
        if (letter === selected.col && r === selected.row) td.classList.add('selected');
    });
}
```
